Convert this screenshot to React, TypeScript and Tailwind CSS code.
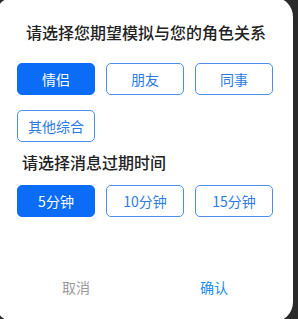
import React, { useState } from "react";

const font = { fontFamily: '"Noto Sans CJK SC", "Noto Sans", sans-serif' };

function Opt({ label, active, onClick }: { label: string; active: boolean; onClick: () => void }) {
  return (
    <button
      onClick={onClick}
      className={
        active
          ? "w-[78px] h-[32px] rounded-[5px] bg-[#0a6cf7] text-white text-[14px] leading-[20px] border border-[#0a6cf7]"
          : "w-[78px] h-[32px] rounded-[5px] bg-white text-[#2c7be5] text-[14px] leading-[20px] border border-[#4a8fea]"
      }
    >
      {label}
    </button>
  );
}

export default function App() {
  const [role, setRole] = useState("情侣");
  const [time, setTime] = useState("5分钟");
  return (
    <div className="w-[298px] h-[319px] bg-[#2a2a2a] overflow-hidden" style={font}>
      <div className="w-[298px] h-[325px] ml-[-5px] mt-[-3px] rounded-[20px] bg-white flex flex-col">
        <div className="pt-[24px] pl-[4px] text-center text-[16px] leading-[22px] font-medium text-[#222]">
          请选择您期望模拟与您的角色关系
        </div>
        <div className="mt-[20px] pl-[22px] flex flex-wrap gap-x-[11px] gap-y-[15px] w-[290px]">
          {["情侣", "朋友", "同事", "其他综合"].map((r) => (
            <Opt key={r} label={r} active={role === r} onClick={() => setRole(r)} />
          ))}
        </div>
        <div className="mt-[9px] pl-[27px] text-[16px] leading-[22px] font-medium text-[#222]">
          请选择消息过期时间
        </div>
        <div className="mt-[12px] pl-[22px] flex gap-x-[11px]">
          {["5分钟", "10分钟", "15分钟"].map((t) => (
            <Opt key={t} label={t} active={time === t} onClick={() => setTime(t)} />
          ))}
        </div>
        <div className="mt-auto pb-[24px] pl-[12px] pr-[10px] flex text-[14px] leading-[22px]">
          <button className="flex-1 text-center text-[#9a9a9a]">取消</button>
          <button className="flex-1 text-center text-[#1a8cf0]">确认</button>
        </div>
      </div>
    </div>
  );
}
